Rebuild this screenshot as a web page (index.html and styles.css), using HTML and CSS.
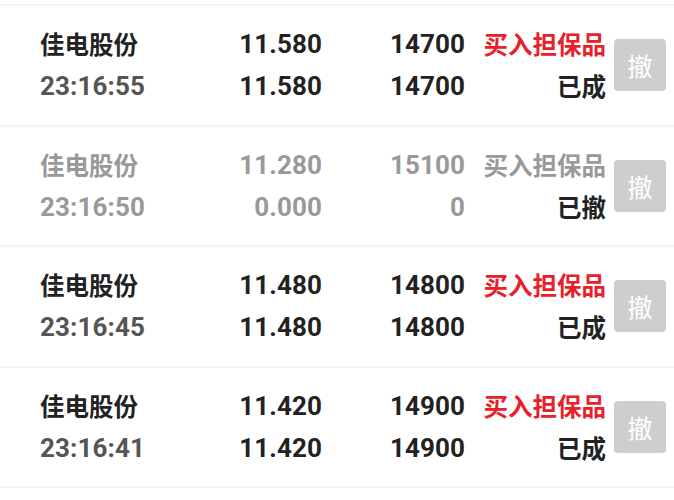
FILE: index.html
```html
<!DOCTYPE html>
<html lang="zh">
<head>
<meta charset="utf-8">
<link rel="stylesheet" href="styles.css">
</head>
<body>
<div class="list">
  <div class="row">
    <div class="c name">佳电股份</div>
    <div class="c num price">11.580</div>
    <div class="c num qty">14700</div>
    <div class="c type red">买入担保品</div>
    <div class="btn">撤</div>
    <div class="c num time">23:16:55</div>
    <div class="c num price">11.580</div>
    <div class="c num qty">14700</div>
    <div class="c status">已成</div>
  </div>
  <div class="row done">
    <div class="c name">佳电股份</div>
    <div class="c num price">11.280</div>
    <div class="c num qty">15100</div>
    <div class="c type">买入担保品</div>
    <div class="btn">撤</div>
    <div class="c num time">23:16:50</div>
    <div class="c num price">0.000</div>
    <div class="c num qty">0</div>
    <div class="c status">已撤</div>
  </div>
  <div class="row">
    <div class="c name">佳电股份</div>
    <div class="c num price">11.480</div>
    <div class="c num qty">14800</div>
    <div class="c type red">买入担保品</div>
    <div class="btn">撤</div>
    <div class="c num time">23:16:45</div>
    <div class="c num price">11.480</div>
    <div class="c num qty">14800</div>
    <div class="c status">已成</div>
  </div>
  <div class="row">
    <div class="c name">佳电股份</div>
    <div class="c num price">11.420</div>
    <div class="c num qty">14900</div>
    <div class="c type red">买入担保品</div>
    <div class="btn">撤</div>
    <div class="c num time">23:16:41</div>
    <div class="c num price">11.420</div>
    <div class="c num qty">14900</div>
    <div class="c status">已成</div>
  </div>
  <div class="end"></div>
</div>
</body>
</html>
```
FILE: styles.css
```css
html, body {
  margin: 0;
  padding: 0;
  background: #fff;
}
body {
  font-family: "Noto Sans CJK SC", sans-serif;
  color: #222;
  overflow: hidden;
}
.list {
  padding-top: 4px;
}
.row {
  border-top: 2px solid #f4f4f4;
  height: 118.5px;
  display: grid;
  grid-template-columns: 40px 140px 142px 143px 141px 8px 52px;
  grid-template-rows: 42px 42px;
  align-content: center;
}
.end {
  border-top: 2px solid #f4f4f4;
}
.c {
  font-size: 24.5px;
  font-weight: 700;
  line-height: 42px;
  white-space: nowrap;
}
.num {
  font-family: "Roboto", "Noto Sans CJK SC", sans-serif;
  font-size: 26px;
  letter-spacing: 0.1px;
}
.name, .time { grid-column: 2; text-align: left; }
.price { grid-column: 3; text-align: right; }
.qty { grid-column: 4; text-align: right; }
.type, .status { grid-column: 5; text-align: right; }
.time { color: #555; }
.red { color: #e8202a; }
.btn {
  grid-column: 7;
  grid-row: 1 / span 2;
  align-self: center;
  width: 52px;
  height: 52px;
  border-radius: 4px;
  background: #cecece;
  color: #fff;
  font-size: 25px;
  display: flex;
  align-items: center;
  justify-content: center;
}
.done .c { color: #999; }
.done .status { color: #222; }
```
